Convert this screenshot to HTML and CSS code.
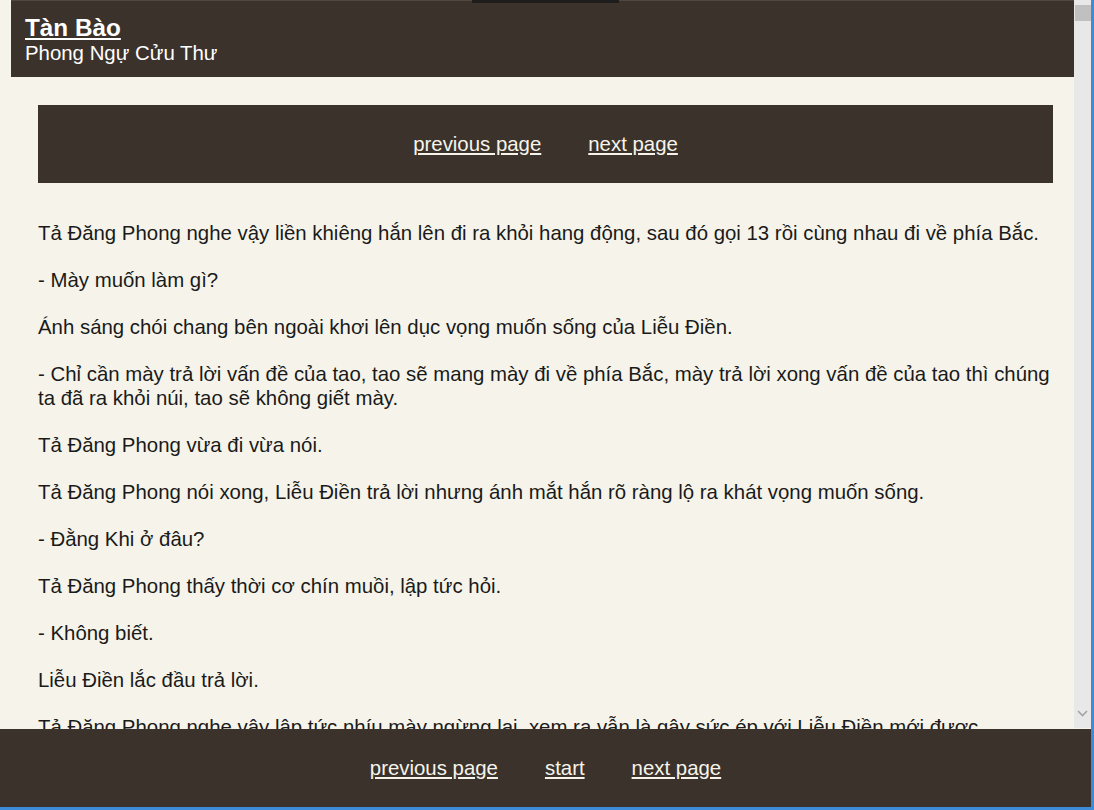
FILE: index.html
```html
<!DOCTYPE html>
<html lang="vi">
<head>
<meta charset="utf-8">
<title>Tàn Bào - Phong Ngự Cửu Thư</title>
<link rel="stylesheet" href="styles.css">
</head>
<body>
<div class="window">
  <div class="viewport">
    <div class="page">
      <header class="site-header">
        <a class="title" href="#">Tàn Bào</a>
        <div class="subtitle">Phong Ngự Cửu Thư</div>
      </header>
      <main class="content">
        <nav class="pager">
          <a href="#">previous page</a>
          <a href="#">next page</a>
        </nav>
        <article class="chapter">
          <p>Tả Đăng Phong nghe vậy liền khiêng hắn lên đi ra khỏi hang động, sau đó gọi 13 rồi cùng nhau đi về phía Bắc.</p>
          <p>- Mày muốn làm gì?</p>
          <p>Ánh sáng chói chang bên ngoài khơi lên dục vọng muốn sống của Liễu Điền.</p>
          <p>- Chỉ cần mày trả lời vấn đề của tao, tao sẽ mang mày đi về phía Bắc, mày trả lời xong vấn đề của tao thì chúng ta đã ra khỏi núi, tao sẽ không giết mày.</p>
          <p>Tả Đăng Phong vừa đi vừa nói.</p>
          <p>Tả Đăng Phong nói xong, Liễu Điền trả lời nhưng ánh mắt hắn rõ ràng lộ ra khát vọng muốn sống.</p>
          <p>- Đằng Khi ở đâu?</p>
          <p>Tả Đăng Phong thấy thời cơ chín muồi, lập tức hỏi.</p>
          <p>- Không biết.</p>
          <p>Liễu Điền lắc đầu trả lời.</p>
          <p>Tả Đăng Phong nghe vậy lập tức nhíu mày ngừng lại, xem ra vẫn là gây sức ép với Liễu Điền mới được.</p>
        </article>
      </main>
    </div>
    <div class="scrollbar">
      <div class="thumb"></div>
      <div class="track"></div>
      <svg class="arrow-down" width="11" height="7" viewBox="0 0 11 7"><path d="M1 1 L5.5 5.5 L10 1" fill="none" stroke="#a3a3a3" stroke-width="1.6"/></svg>
    </div>
  </div>
  <footer class="bottom-bar">
    <a href="#">previous page</a>
    <a href="#">start</a>
    <a href="#">next page</a>
  </footer>
  <div class="tab-indicator"></div>
</div>
</body>
</html>
```

FILE: styles.css
```css
html, body {
  margin: 0;
  padding: 0;
  overflow: hidden;
  background: #f6f4ea;
}

.window {
  position: relative;
  width: 1094px;
  height: 810px;
  box-sizing: border-box;
  border-right: 3px solid #3c8cda;
  border-bottom: 3px solid #3c8cda;
  font-family: "Liberation Sans", Arial, sans-serif;
}

.viewport {
  display: flex;
  height: 807px;
}

.page {
  flex: 1;
  overflow: hidden;
  background: #f6f4ea;
}

.site-header {
  margin-left: 11px;
  height: 77px;
  box-sizing: border-box;
  background: #3b322c;
  border-top: 1px solid #4e4742;
  padding: 13px 14px 0;
  color: #ffffff;
}

.title {
  display: inline-block;
  color: #ffffff;
  font-weight: bold;
  font-size: 24.3px;
  line-height: 27px;
}

.subtitle {
  font-size: 20.4px;
  line-height: 24px;
}

.content {
  padding: 28px 21px 0 38px;
}

.pager {
  display: flex;
  justify-content: center;
  align-items: center;
  gap: 47px;
  height: 78px;
  background: #3b322c;
}

.pager a,
.bottom-bar a {
  color: #f6f4ea;
  font-size: 20.4px;
  line-height: 24px;
}

.chapter {
  padding-top: 38px;
  color: #1a1a1a;
  font-size: 20.4px;
  line-height: 24px;
}

.chapter p {
  margin: 0 0 23px;
}

.scrollbar {
  width: 17px;
  display: flex;
  flex-direction: column;
  align-items: center;
  background: #e8e8e8;
  padding-top: 5px;
  box-sizing: border-box;
  height: 728px;
}

.thumb {
  width: 16px;
  height: 16px;
  background: #c0c0c0;
}

.track {
  flex: 1;
}

.arrow-down {
  margin-bottom: 11px;
}

.bottom-bar {
  position: absolute;
  left: 0;
  bottom: 0;
  width: 1091px;
  height: 78px;
  display: flex;
  justify-content: center;
  align-items: center;
  gap: 47px;
  background: #3b322c;
}

.tab-indicator {
  position: absolute;
  top: 0;
  left: 472px;
  width: 147px;
  height: 3px;
  background: #1f1d1c;
}
```
